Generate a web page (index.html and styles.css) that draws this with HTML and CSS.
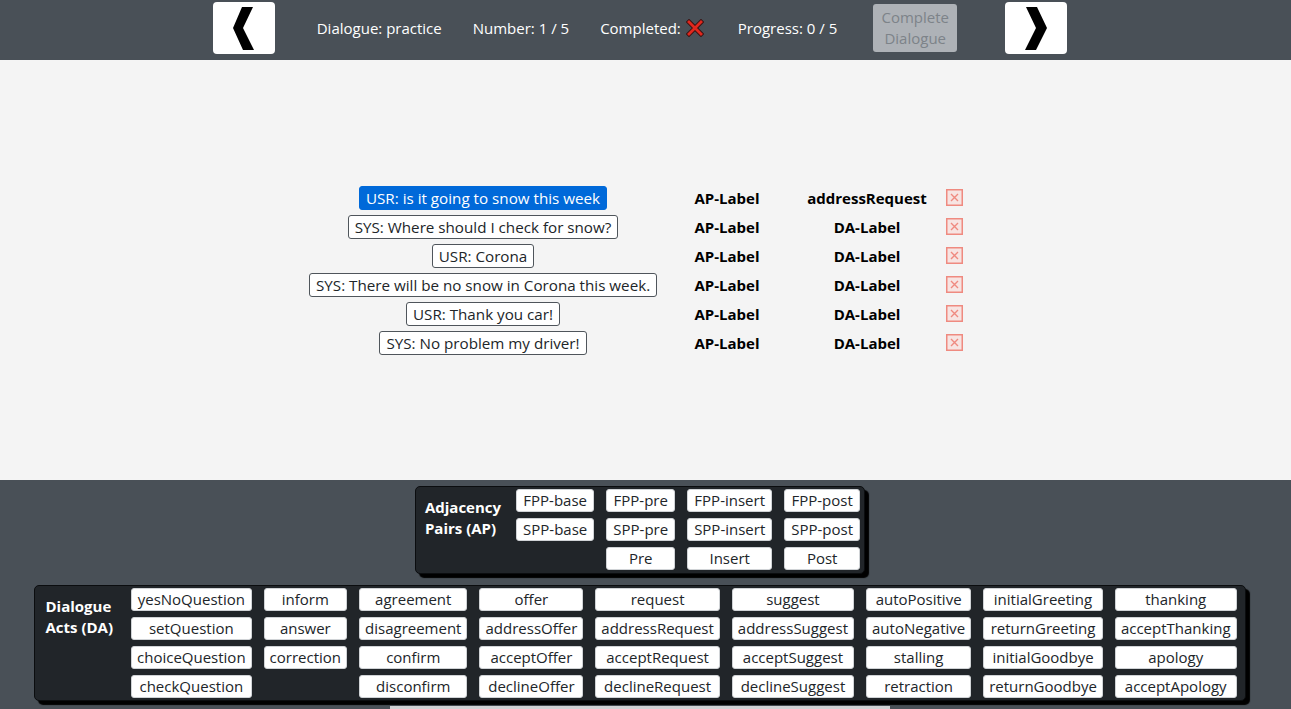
FILE: index.html
```html
<!DOCTYPE html>
<html lang="en">
<head>
<meta charset="utf-8">
<title>Dialogue annotation</title>
<link rel="stylesheet" href="styles.css">
</head>
<body>
<header class="topbar">
  <div class="topbar-inner">
    <button class="nav-btn nav-prev" aria-label="Previous">
      <svg width="62" height="52" viewBox="0 0 62 52"><polygon points="29,5 40,5 30,26 41,48 30,48 20,26" fill="#000"/></svg>
    </button>
    <span class="info info-dialogue">Dialogue: practice</span>
    <span class="info info-number">Number: 1 / 5</span>
    <span class="info info-completed">Completed:
      <svg class="cross" width="18" height="18" viewBox="0 0 18 18"><path d="M3 3 L15 15 M15 3 L3 15" stroke="#3a1010" stroke-width="4.6" stroke-linecap="square"/><path d="M3 3 L15 15 M15 3 L3 15" stroke="#e0281e" stroke-width="2.8" stroke-linecap="square"/></svg>
    </span>
    <span class="info info-progress">Progress: 0 / 5</span>
    <button class="complete-btn" disabled>Complete<br>Dialogue</button>
    <button class="nav-btn nav-next" aria-label="Next">
      <svg width="62" height="52" viewBox="0 0 62 52"><polygon points="21,5 32,5 42,26 31,48 20,48 31,26" fill="#000"/></svg>
    </button>
  </div>
</header>

<main class="workspace">
  <div class="turns">
    <div class="utt"><span class="utt-box selected">USR: is it going to snow this week</span></div>
    <div class="lbl">AP-Label</div>
    <div class="lbl">addressRequest</div>
    <div class="del"><svg width="17" height="17" viewBox="0 0 17 17"><rect x="0.75" y="0.75" width="15.5" height="15.5" fill="#f7e4e2" stroke="#ef8a80" stroke-width="1.5"/><path d="M5 5 L12 12 M12 5 L5 12" stroke="#ef8a80" stroke-width="1.4"/></svg></div>

    <div class="utt"><span class="utt-box">SYS: Where should I check for snow?</span></div>
    <div class="lbl">AP-Label</div>
    <div class="lbl">DA-Label</div>
    <div class="del"><svg width="17" height="17" viewBox="0 0 17 17"><rect x="0.75" y="0.75" width="15.5" height="15.5" fill="#f7e4e2" stroke="#ef8a80" stroke-width="1.5"/><path d="M5 5 L12 12 M12 5 L5 12" stroke="#ef8a80" stroke-width="1.4"/></svg></div>

    <div class="utt"><span class="utt-box">USR: Corona</span></div>
    <div class="lbl">AP-Label</div>
    <div class="lbl">DA-Label</div>
    <div class="del"><svg width="17" height="17" viewBox="0 0 17 17"><rect x="0.75" y="0.75" width="15.5" height="15.5" fill="#f7e4e2" stroke="#ef8a80" stroke-width="1.5"/><path d="M5 5 L12 12 M12 5 L5 12" stroke="#ef8a80" stroke-width="1.4"/></svg></div>

    <div class="utt"><span class="utt-box">SYS: There will be no snow in Corona this week.</span></div>
    <div class="lbl">AP-Label</div>
    <div class="lbl">DA-Label</div>
    <div class="del"><svg width="17" height="17" viewBox="0 0 17 17"><rect x="0.75" y="0.75" width="15.5" height="15.5" fill="#f7e4e2" stroke="#ef8a80" stroke-width="1.5"/><path d="M5 5 L12 12 M12 5 L5 12" stroke="#ef8a80" stroke-width="1.4"/></svg></div>

    <div class="utt"><span class="utt-box">USR: Thank you car!</span></div>
    <div class="lbl">AP-Label</div>
    <div class="lbl">DA-Label</div>
    <div class="del"><svg width="17" height="17" viewBox="0 0 17 17"><rect x="0.75" y="0.75" width="15.5" height="15.5" fill="#f7e4e2" stroke="#ef8a80" stroke-width="1.5"/><path d="M5 5 L12 12 M12 5 L5 12" stroke="#ef8a80" stroke-width="1.4"/></svg></div>

    <div class="utt"><span class="utt-box">SYS: No problem my driver!</span></div>
    <div class="lbl">AP-Label</div>
    <div class="lbl">DA-Label</div>
    <div class="del"><svg width="17" height="17" viewBox="0 0 17 17"><rect x="0.75" y="0.75" width="15.5" height="15.5" fill="#f7e4e2" stroke="#ef8a80" stroke-width="1.5"/><path d="M5 5 L12 12 M12 5 L5 12" stroke="#ef8a80" stroke-width="1.4"/></svg></div>
  </div>
</main>

<section class="toolbox">
  <div class="panel panel-ap">
    <div class="panel-title">Adjacency<br>Pairs (AP)</div>
    <div class="tags tags-ap">
      <button class="tag">FPP-base</button>
      <button class="tag">SPP-base</button>
      <span class="tag-empty"></span>
      <button class="tag">FPP-pre</button>
      <button class="tag">SPP-pre</button>
      <button class="tag">Pre</button>
      <button class="tag">FPP-insert</button>
      <button class="tag">SPP-insert</button>
      <button class="tag">Insert</button>
      <button class="tag">FPP-post</button>
      <button class="tag">SPP-post</button>
      <button class="tag">Post</button>
    </div>
  </div>

  <div class="panel panel-da">
    <div class="panel-title">Dialogue<br>Acts (DA)</div>
    <div class="tags tags-da">
      <button class="tag">yesNoQuestion</button>
      <button class="tag">setQuestion</button>
      <button class="tag">choiceQuestion</button>
      <button class="tag">checkQuestion</button>
      <button class="tag">inform</button>
      <button class="tag">answer</button>
      <button class="tag">correction</button>
      <span class="tag-empty"></span>
      <button class="tag">agreement</button>
      <button class="tag">disagreement</button>
      <button class="tag">confirm</button>
      <button class="tag">disconfirm</button>
      <button class="tag">offer</button>
      <button class="tag">addressOffer</button>
      <button class="tag">acceptOffer</button>
      <button class="tag">declineOffer</button>
      <button class="tag">request</button>
      <button class="tag">addressRequest</button>
      <button class="tag">acceptRequest</button>
      <button class="tag">declineRequest</button>
      <button class="tag">suggest</button>
      <button class="tag">addressSuggest</button>
      <button class="tag">acceptSuggest</button>
      <button class="tag">declineSuggest</button>
      <button class="tag">autoPositive</button>
      <button class="tag">autoNegative</button>
      <button class="tag">stalling</button>
      <button class="tag">retraction</button>
      <button class="tag">initialGreeting</button>
      <button class="tag">returnGreeting</button>
      <button class="tag">initialGoodbye</button>
      <button class="tag">returnGoodbye</button>
      <button class="tag">thanking</button>
      <button class="tag">acceptThanking</button>
      <button class="tag">apology</button>
      <button class="tag">acceptApology</button>
    </div>
  </div>

  <div class="peek"></div>
</section>
</body>
</html>
```

FILE: styles.css
```css
* { box-sizing: border-box; }

html, body {
  margin: 0;
  padding: 0;
  height: 709px;
  overflow: hidden;
}

body {
  font-family: "Open Sans", "Noto Sans", sans-serif;
  font-size: 15px;
  color: #212529;
  background: #495057;
}

/* ---------- top bar ---------- */
.topbar {
  height: 60px;
  background: #495057;
}

.topbar-inner {
  width: 1280px;
  height: 60px;
  display: flex;
  align-items: center;
  justify-content: center;
  color: #fff;
}

.nav-btn {
  width: 62px;
  height: 52px;
  padding: 0;
  border: none;
  border-radius: 4px;
  background: #fff;
  display: flex;
  align-items: center;
  justify-content: center;
  align-self: flex-start;
  margin-top: 2px;
}

.nav-btn svg { display: block; }

.nav-prev { margin-right: 42px; }
.nav-next { margin-left: 48px; }

.info {
  display: flex;
  align-items: center;
  white-space: nowrap;
  line-height: 20px;
  margin-bottom: 4px;
}

.info-dialogue { margin-right: 31px; }
.info-number { margin-right: 31px; }
.info-completed { margin-right: 34px; }
.info-progress { margin-right: 36px; }

.cross { margin-left: 5px; }

.complete-btn {
  width: 84px;
  height: 48px;
  align-self: flex-start;
  margin-top: 4px;
  padding: 0 0 0 0;
  border: none;
  border-radius: 3px;
  background: #aeb2b7;
  color: #7d8389;
  font-family: inherit;
  font-size: 15px;
  line-height: 21px;
  text-align: center;
}

/* ---------- dialogue area ---------- */
.workspace {
  height: 420px;
  background: #f4f4f4;
  width: 100%;
  display: flex;
  align-items: center;
}

.turns {
  width: 1280px;
  display: grid;
  grid-template-columns: 348px 140px 140px 34px;
  grid-auto-rows: 29px;
  justify-content: center;
  align-items: center;
}

.utt { text-align: center; }

.utt-box {
  display: inline-block;
  height: 24px;
  line-height: 22px;
  padding: 0 6px;
  border: 1px solid #4f555b;
  border-radius: 3px;
  background: #fff;
  color: #212529;
  font-size: 15.2px;
  white-space: nowrap;
}

.utt-box.selected {
  background: #0069d9;
  border-color: #0069d9;
  color: #fff;
}

.lbl {
  text-align: center;
  font-weight: 700;
  font-size: 15px;
  color: #000;
}

.del {
  display: flex;
  justify-content: center;
  align-items: center;
}

.del svg { display: block; }

/* ---------- toolbox ---------- */
.toolbox {
  height: 229px;
  background: #495057;
  padding-top: 6px;
  width: 1280px;
  display: flex;
  flex-direction: column;
  align-items: center;
}

.panel {
  display: flex;
  align-items: flex-start;
  background: #212529;
  border: 1px solid #0b0d0f;
  border-radius: 5px;
  box-shadow: 4px 4px 1px #000;
  color: #fff;
}

.panel-ap {
  padding: 2px 4px 3px 9px;
}

.panel-da {
  margin-top: 11px;
  padding: 2px 8px 2px 10px;
}

.panel-title {
  font-weight: 700;
  font-size: 15px;
  line-height: 21px;
  padding-top: 8px;
  white-space: nowrap;
}

.panel-ap .panel-title { margin-right: 15px; }
.panel-da .panel-title { margin-right: 18px; }

.tags {
  display: grid;
  grid-auto-flow: column;
  grid-auto-columns: auto;
  column-gap: 12px;
  row-gap: 6px;
}

.tags-ap { grid-template-rows: repeat(3, 23px); }
.tags-da { grid-template-rows: repeat(4, 23px); }

.tag {
  height: 23px;
  width: 100%;
  margin: 0;
  padding: 0 5px;
  border: 1px solid #d0d3d6;
  border-radius: 3px;
  background: #fff;
  color: #212529;
  font-family: inherit;
  font-size: 15px;
  line-height: 21px;
  text-align: center;
  white-space: nowrap;
}

.tags-ap .tag { padding: 0 6px; }

.tag-empty { display: block; }

.peek {
  margin-top: 5px;
  width: 500px;
  height: 4px;
  background: #cfd1d3;
}
```
